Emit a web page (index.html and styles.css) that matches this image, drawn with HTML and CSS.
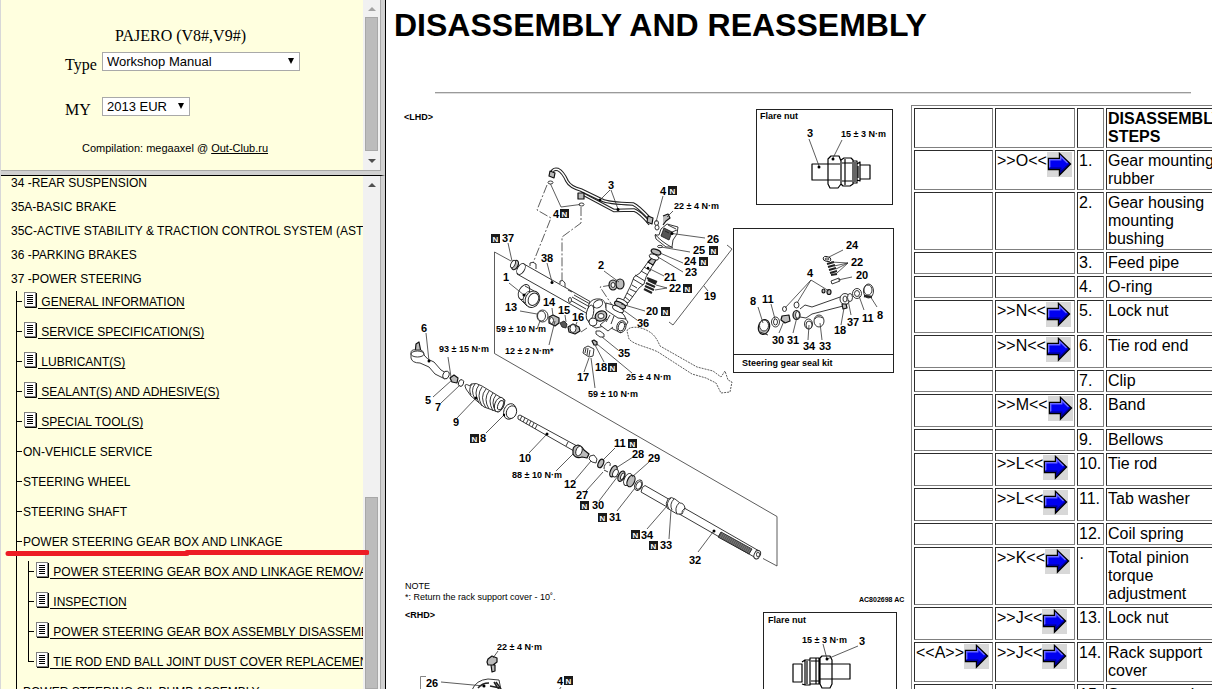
FILE: index.html
```html
<!DOCTYPE html>
<html lang="en">
<head>
<meta charset="utf-8">
<title>Pajero Workshop Manual</title>
<link rel="stylesheet" href="styles.css">
</head>
<body>
<svg class="defs" width="0" height="0" aria-hidden="true">
  <symbol id="doc" viewBox="0 0 13 16">
    <rect x="0.5" y="0.5" width="11" height="14" fill="#fff" stroke="#808080"/>
    <path d="M1 15.5H12.5V1" fill="none" stroke="#000"/>
    <path d="M3 3.5H9M3 5.5H9M3 7.5H9M3 9.5H9M3 11.5H9" stroke="#000"/>
  </symbol>
  <symbol id="arrow" viewBox="0 0 25 25">
    <rect width="25" height="25" fill="#d8d8d8"/>
    <path d="M1.5 6.5H12.5V1.5L23.5 12L12.5 23V17.5H1.5Z" fill="#0000f0" stroke="#000" stroke-width="1.4"/>
    <path d="M2.7 15.5V7.7H13.7V4.5L20.5 11" fill="none" stroke="#6a6aff" stroke-width="1.4"/>
    <path d="M3 16H13.8V19.8L21.5 12.4" fill="none" stroke="#00008a" stroke-width="1.2"/>
  </symbol>
  <symbol id="new" viewBox="0 0 9 9">
    <rect width="9" height="9" fill="#1a1a1a"/>
    <text class="new-text" x="4.5" y="7.5" text-anchor="middle">N</text>
  </symbol>
</svg>

<aside class="sidebar">
  <section class="frame frame-top">
    <form class="picker">
      <p class="model">PAJERO (V8#,V9#)</p>
      <div class="field">
        <label for="type">Type</label>
        <span class="select select-wide"><select id="type"><option>Workshop Manual</option></select></span>
      </div>
      <div class="field">
        <label for="year">MY</label>
        <span class="select select-short"><select id="year"><option>2013 EUR</option></select></span>
      </div>
      <p class="credit">Compilation: megaaxel @ <a href="#">Out-Club.ru</a></p>
    </form>
    <div class="scrollbar" aria-hidden="true">
      <span class="up off"></span><span class="thumb"></span><span class="down"></span>
    </div>
  </section>
  <section class="frame frame-tree">
    <nav class="tree">
      <ul class="chapters">
        <li>34 -REAR SUSPENSION</li>
        <li>35A-BASIC BRAKE</li>
        <li>35C-ACTIVE STABILITY &amp; TRACTION CONTROL SYSTEM (ASTC)</li>
        <li>36 -PARKING BRAKES</li>
        <li>37 -POWER STEERING
          <ul class="branch">
            <li><svg class="doc"><use href="#doc"/></svg><a href="#">&nbsp;GENERAL INFORMATION</a></li>
            <li><svg class="doc"><use href="#doc"/></svg><a href="#">&nbsp;SERVICE SPECIFICATION(S)</a></li>
            <li><svg class="doc"><use href="#doc"/></svg><a href="#">&nbsp;LUBRICANT(S)</a></li>
            <li><svg class="doc"><use href="#doc"/></svg><a href="#">&nbsp;SEALANT(S) AND ADHESIVE(S)</a></li>
            <li><svg class="doc"><use href="#doc"/></svg><a href="#">&nbsp;SPECIAL TOOL(S)</a></li>
            <li>ON-VEHICLE SERVICE</li>
            <li>STEERING WHEEL</li>
            <li>STEERING SHAFT</li>
            <li>POWER STEERING GEAR BOX AND LINKAGE
              <ul class="branch leaf">
                <li><svg class="doc"><use href="#doc"/></svg><a href="#">&nbsp;POWER STEERING GEAR BOX AND LINKAGE REMOVAL AND INSTALLATION</a></li>
                <li><svg class="doc"><use href="#doc"/></svg><a href="#">&nbsp;INSPECTION</a></li>
                <li><svg class="doc"><use href="#doc"/></svg><a href="#">&nbsp;POWER STEERING GEAR BOX ASSEMBLY DISASSEMBLY AND REASSEMBLY</a></li>
                <li><svg class="doc"><use href="#doc"/></svg><a href="#">&nbsp;TIE ROD END BALL JOINT DUST COVER REPLACEMENT</a></li>
              </ul>
            </li>
            <li>POWER STEERING OIL PUMP ASSEMBLY</li>
          </ul>
        </li>
      </ul>
    </nav>
    <div class="scrollbar" aria-hidden="true">
      <span class="up"></span><span class="track"></span><span class="thumb"></span>
    </div>
    <svg class="marker" viewBox="0 0 364 6" aria-hidden="true"><path d="M3 3.5H182M182 2.5H362" stroke="#ed1c24" stroke-width="5" stroke-linecap="round"/></svg>
  </section>
</aside>

<main class="manual">
  <h1>DISASSEMBLY AND REASSEMBLY</h1>
  <hr>
  <div class="content">
  <svg class="diagram" viewBox="400 105 505 620" role="img" aria-label="Exploded view of the steering gear">
    <!-- frames -->
    <g class="box">
      <rect x="756.5" y="109.5" width="136" height="95"/>
      <rect x="733.5" y="228.5" width="160" height="144"/>
      <path d="M733.5 354.5H893.5"/>
      <rect x="763.5" y="612.5" width="133" height="120"/>
    </g>

    <!-- assembly outline and phantom lines -->
    <g class="thin">
      <path d="M511 261L494.500 252V353.500L777 516.500V566L763 558.500"/>
      <path d="M727 245L732 249L673 325L669 322M704 286L708 291"/>
      <path class="phantom" d="M547 185L537 210L551 218L533 263M581 207V223L562 237V282M612 285L600 287L612 305"/>
      <path class="dash" d="M627 331C628 326 640 326 648 331C654 334 657 339 660 346L697 367L713 371L721 377L725 371L728 380L732 382L730 392L721 393L716 383L706 378L692 374L658 352C648 347 634 345 629 339Z"/>
    </g>

    <!-- feed pipes -->
    <g class="pipe-out"><path d="M552 176Q551 168 558 169.500Q563 172 567 181Q570 187 581 190L602 200Q607 203 633 204Q638 206 650 219"/><path d="M581 193L614 210.500L634 210Q640 212 650 224"/></g>
    <g class="pipe-in"><path d="M552 176Q551 168 558 169.500Q563 172 567 181Q570 187 581 190L602 200Q607 203 633 204Q638 206 650 219"/><path d="M581 193L614 210.500L634 210Q640 212 650 224"/></g>
    <g class="part">
      <path d="M550 171L555 173L554 178L549 176ZM578 193H584V199H578ZM648 216L653 218L652 224L647 222Z" class="shade"/>
      <ellipse cx="550.500" cy="182.500" rx="2.500" ry="1.500"/><ellipse cx="581.500" cy="204.500" rx="2.500" ry="1.500"/>
      <ellipse cx="656.500" cy="223" rx="2" ry="2.500"/><ellipse cx="657" cy="227.500" rx="2" ry="2.500"/>
      <path d="M663 216L668 214L670 218L666 221L663 225" class="shade"/>
    </g>

    <!-- rack housing -->
    <g class="part">
      <path d="M523 263.500L590 301.500L587 313.500L517 274Z"/>
      <ellipse cx="521" cy="269" rx="3.500" ry="6" transform="rotate(30 521 269)"/>
      <path d="M530 266V263Q533 261 536 264V269M560 284V281Q563 279 565 283V287M568 290L572 292M574 295L590 304M572 297L588 306M570 300L586 309"/>
      <ellipse cx="570" cy="300" rx="1.500" ry="2.500"/>
      <ellipse cx="515" cy="265" rx="3" ry="5" transform="rotate(25 515 265)" class="shade"/>
      <ellipse cx="513" cy="264" rx="2" ry="4" transform="rotate(25 513 264)"/>
      <path d="M589 304Q592 298 600 299Q606 300 606 308L624 317L628 322L621 333L611 328L604 326L596 328Q588 325 587 317Z"/>
      <ellipse cx="598" cy="304" rx="5" ry="3.500" transform="rotate(-30 598 304)"/>
      <ellipse cx="590" cy="313" rx="3.500" ry="8" transform="rotate(12 590 313)"/>
      <ellipse cx="601" cy="316" rx="6" ry="5" transform="rotate(-25 601 316)" class="shade"/>
      <ellipse cx="593" cy="322" rx="4" ry="4"/>
      <ellipse cx="601" cy="316" rx="3" ry="2.500"/>
      <path d="M606 303L613 305L624 315L626 319L618 318L606 310ZM607 319L600 325L608 331L613 327M610 315L606 322M614 316L611 324"/>
      <ellipse cx="621.500" cy="326.500" rx="4.500" ry="6" transform="rotate(15 621 326)"/>
      <ellipse cx="621.500" cy="326.500" rx="3" ry="4.500" transform="rotate(15 621 326)"/>
      <!-- bushings and rubber -->
      <ellipse cx="524" cy="292" rx="5" ry="8" transform="rotate(28 524 292)"/>
      <ellipse cx="527" cy="297" rx="3" ry="6" transform="rotate(28 527 297)"/>
      <ellipse cx="532.500" cy="299" rx="7" ry="8.500" transform="rotate(28 532 299)"/>
      <ellipse cx="533.500" cy="299" rx="5" ry="6.500" transform="rotate(28 533 299)"/>
      <path d="M520 299L527 306M525 286L534 291"/>
      <ellipse cx="613" cy="285" rx="4" ry="5" class="shade"/><ellipse cx="620" cy="284" rx="4" ry="5" class="shade"/><ellipse cx="613" cy="285" rx="2" ry="2.500"/>
      <ellipse cx="542.500" cy="316" rx="5.500" ry="6"/><ellipse cx="541.500" cy="316" rx="4" ry="5"/>
      <path d="M549 317L553 315L559 318V323L555 326L549 323Z" class="shade"/><ellipse cx="551.500" cy="320.500" rx="2" ry="3"/>
      <path d="M560 323L564 321L567 324L566 328L562 327Z" class="dark"/>
      <path d="M568 327L573 324L579 327L580 331L575 334L569 332Z" class="shade"/><ellipse cx="573" cy="328.500" rx="3" ry="4"/>
      <path d="M596 331L600 331L604 334L604 337L600 337L596 334Z"/><path d="M592 341L594 340L597 342V345L594 345Z" class="shade"/>
      <path d="M584 348L588 346L594 349L593 356L589 357L583 353Z"/><path d="M586 348L585 353M588 348L587 355M590 350L589 356"/>
    </g>

    <!-- pinion and valve -->
    <g class="part">
      <path d="M648 262L653 265L646 277L644 284L639 288L628 303L623 301L631 285L634 277L640 273Z"/>
      <path d="M635 275L645 281M633 279L643 285M641 271L648 275M644 267L651 271M632 285L637 288M630 289L636 292M627 293L633 297M625 297L630 301"/>
      <path d="M648 262L652 258L656 260L653 265Z" class="shade"/>
      <ellipse cx="622" cy="302" rx="6" ry="2.500" transform="rotate(28 622 302)"/>
      <ellipse cx="620" cy="305" rx="6" ry="2.500" transform="rotate(28 620 305)" class="shade"/>
      <ellipse cx="618" cy="309" rx="6" ry="2.500" transform="rotate(28 618 309)"/>
      <ellipse cx="656" cy="252" rx="5" ry="2.500" transform="rotate(20 656 252)" class="shade"/>
      <ellipse cx="654" cy="257" rx="5" ry="2.500" transform="rotate(20 654 257)"/>
      <path d="M648 280L656 284M646 283L655 287M645 286L654 290M644 289L652 293M647 278L657 282" stroke-width="2.200"/>
      <ellipse cx="660" cy="246.500" rx="2.500" ry="1.200"/>
      <path d="M655 235L659 235L661 229L667 224L678 227L677 234L673 240L672 247L666 247L656 239Z"/>
      <path d="M664 228L672 232L669 240L661 236ZM668 225L676 229M672 232L677 230M665 231L669 233" class="dark"/>
      <path d="M655 234Q660 241 673 248"/>
    </g>

    <!-- tie rod end -->
    <g class="part">
      <path d="M415 354L416 344L419 342L421 352Z" class="shade"/>
      <path d="M411 353Q411 349 416 350L421 350Q424 351 424 355Q427 360 434 362L441 370L448 374L445 379L435 374L429 367L420 363Q412 363 411 358Z"/>
      <ellipse cx="417.500" cy="354" rx="6.500" ry="3"/>
      <ellipse cx="446" cy="375" rx="3" ry="4" transform="rotate(20 446 375)"/>
      <path d="M450 378L454 375L458 378L457 383L452 382Z" class="shade"/>
      <ellipse cx="461" cy="383" rx="2.500" ry="3.500" transform="rotate(20 461 383)"/>
      <!-- bellows -->
      <path d="M465 386Q465 383 470 386L471 384Q476 382 482 386L500 397L505 400Q504 410 498 412L484 407L471 396L466 389Z"/>
      <path d="M472 384Q468 389 471 395M475 384Q470 390 475 399M479 385Q473 392 479 403M482 387Q476 395 482 406M486 389Q479 397 486 408M489 391Q483 399 489 409M493 393Q487 400 493 411M496 395Q490 402 496 412"/>
      <ellipse cx="499.500" cy="404.500" rx="4.500" ry="7.500" transform="rotate(20 499 404)"/><ellipse cx="500.500" cy="405" rx="2.500" ry="5" transform="rotate(20 500 405)"/>
      <ellipse cx="510" cy="411.500" rx="6" ry="8" transform="rotate(20 510 411)"/><ellipse cx="511.500" cy="412" rx="5" ry="6.500" transform="rotate(20 511 412)"/>
      <!-- tie rod -->
      <path d="M520 415L577 446L574 451L518 419Q517 415 520 415ZM522 416L520 420M525 418L523 422M528 420L526 424M531 421L529 425M534 423L532 427M537 425L535 429M568 442L566 446"/>
      <path d="M573 450Q573 446 578 445Q582 446 584 450L589 454L587 458L582 457Q576 459 573 454Z" class="shade"/>
      <ellipse cx="579" cy="451" rx="3" ry="5" transform="rotate(20 579 451)"/>
      <path d="M590 456L594 455L597 459L596 463L592 462L589 459Z"/>
      <ellipse cx="601" cy="463.500" rx="2.500" ry="4.500" transform="rotate(25 601 463)" class="shade"/>
      <path d="M604 469Q604 463 609 462Q611 463 610 466M608 472L604 470"/>
      <ellipse cx="613.500" cy="471" rx="3" ry="6" transform="rotate(25 613 471)" class="shade"/><ellipse cx="615.500" cy="473" rx="2.500" ry="4" transform="rotate(25 615 473)"/>
      <ellipse cx="621.500" cy="476" rx="3" ry="5.500" transform="rotate(25 621 476)" class="shade"/><ellipse cx="622.500" cy="476" rx="1.500" ry="3.500" transform="rotate(25 622 476)"/>
      <ellipse cx="628" cy="479.500" rx="3.500" ry="6.500" transform="rotate(25 628 479)"/><ellipse cx="631" cy="481" rx="3.500" ry="6" transform="rotate(25 631 481)" class="shade"/>
      <ellipse cx="638.500" cy="485" rx="3.500" ry="5.500" transform="rotate(25 638 485)"/><ellipse cx="639" cy="485.500" rx="2.500" ry="4" transform="rotate(25 639 485)"/>
      <!-- rack -->
      <path d="M645 485.500L760 551.500Q761 556 756 558L641 492Q642 486 645 485.500Z"/>
      <path d="M668 499Q671 496 675 499L680 503Q684 503 685 508L682 514L677 514L667 508Q665 503 668 499Z"/>
      <path d="M671 498Q665 503 669 509M674 499Q669 504 672 510M679 503Q674 508 677 514M685 508Q681 511 682 514"/>
      <path d="M721 532L752 549L749 554L718 537Z" class="dark"/>
      <path d="M721 535L750 551" stroke="#777" stroke-width="5" stroke-dasharray="1 1"/>
      <ellipse cx="757.500" cy="554.500" rx="3" ry="4.500" transform="rotate(25 757 554)"/><ellipse cx="758" cy="554.500" rx="1.500" ry="2.500"/>
    </g>

    <!-- flare nut -->
    <g class="part nut">
      <path d="M812 164H828V180H812ZM828 159L831 156H839L841 161V184L838 188H830L828 184ZM841 160L844 158H851L853 160V184L850 186H843L841 184ZM853 161H857V183H853ZM857 164L860 162V181L857 180M860 165H870V179H860Z"/>
      <path d="M828 164H840M828 180H840M842 163H852M842 181H852M845 159V185M855 162V182M858 166V178"/>
      <path d="M793 664H802V682H793ZM802 662L805 660V685L802 684M805 660H810V685H805ZM810 658H819V684H810ZM820 658L822 656H830L832 660V684L830 688H822L820 684ZM832 664H850V679H832Z"/>
      <path d="M811 661H819M811 681H819M816 658V684M820 664H832M820 679H832M807 661V684"/>
    </g>

    <!-- seal kit -->
    <g class="part">
      <ellipse cx="764" cy="327" rx="5.500" ry="7.500" transform="rotate(15 764 327)" class="shade"/><ellipse cx="764" cy="325.500" rx="4.500" ry="5.500"/><path d="M760 332L768 335"/>
      <ellipse cx="775.500" cy="322" rx="4" ry="5"/><ellipse cx="775.500" cy="322" rx="2" ry="3"/>
      <path d="M800 309L805 305L812 307L843 296L847 305L812 314L806 318L800 317"/>
      <path d="M782 316L789 315L790 321L785 323L781 320Z" class="shade"/><ellipse cx="796.500" cy="315" rx="3.500" ry="4.500" class="shade"/><ellipse cx="797.500" cy="315" rx="2" ry="3.500"/>
      <ellipse cx="845" cy="299" rx="5" ry="5.500"/><ellipse cx="845" cy="299" rx="2" ry="3"/><ellipse cx="850" cy="297.500" rx="2.500" ry="4"/>
      <ellipse cx="857" cy="293.500" rx="4.500" ry="5"/><ellipse cx="857" cy="293.500" rx="2.500" ry="3"/>
      <ellipse cx="868.500" cy="291" rx="5" ry="7"/><ellipse cx="868" cy="290" rx="4" ry="5"/><path d="M864 296L872 297" stroke-width="2.500"/>
      <path d="M842 304L846 304L847 308L843 309Z" class="shade"/>
      <ellipse cx="784.500" cy="309" rx="2" ry="2.500"/><ellipse cx="796.500" cy="305" rx="2.500" ry="3"/>
      <ellipse cx="823.500" cy="291" rx="1.500" ry="2" class="shade"/><ellipse cx="829" cy="292" rx="2" ry="2.500" class="shade"/>
      <ellipse cx="808.500" cy="324" rx="4" ry="5"/><ellipse cx="809" cy="325" rx="3" ry="4"/>
      <ellipse cx="819" cy="321" rx="5" ry="6"/><path d="M815 319Q817 315 823 318"/>
      <ellipse cx="827" cy="259" rx="4" ry="2.500" transform="rotate(15 827 259)"/><ellipse cx="827" cy="259" rx="2" ry="1"/>
      <path d="M827 264L834 262M828 267L835 265M829 270L836 268M830 273L837 271M831 275L837 274" stroke-width="2"/>
      <path d="M831 281L839 278L840 281L832 284Z"/>
    </g>

    <!-- right-hand-drive parts -->
    <g class="part">
      <path d="M488 659L492 656L497 658V662L493 665H488L487 662ZM491 665L495 665L495 671L492 672Z" class="shade"/>
      <path d="M472 690Q476 680 488 679L499 680L501 690"/><path d="M478 688Q482 683 489 683M494 682L499 690M496 682L501 689M490 686L500 688" stroke-width="1.500"/>
      <path d="M426 676.500H420.500V690" class="thin-line"/>
    </g>

    <!-- leaders -->
    <g class="leader">
      <path d="M610 190L600 200M611 190L618 209M550.500 184L561 207L580 204.500M663 196L656 222M673 211L667 217M705 238L672 233.500M690 252L661 247M683 263L660 253M683 272L658 257M664 276L648 268M667 288L656 285M667 288L655 290M645 311L621 304M637 320L619 307"/>
      <path d="M508 243L512 261M547 263L552 282M604 271L619 282M509 283L524 295M520 311L537 314M552 308L553 316M565 315L566 322M577 322L575 327M537 329L540 321M555 321L549 345M581 332L587 328M618 350L602 337M604 362L595 345M632 373L597 344M584 372L589 358M595 388L591 358"/>
      <path d="M426 333L429 361M448 357L451 377M433 397L452 380M441 403L460 385M457 418L476 398M486 433L504 415M529 453L547 434M556 471L573 454M575 480L591 461M586 491L603 472M615 448L603 460M633 457L616 468M649 462L632 477M599 501L618 476M617 511L635 488M647 529L667 506M669 539L671 510M698 552L713 532"/>
      <path d="M809 139L819 166M842 140L833 158M843 250L829 257M848 263L831 262M848 263L834 266M848 263L836 269M848 263L837 273M852 277L838 280M811 280L785 308M811 280L797 303M811 280L829 291M758 307L763 323M771 304L775 319M779 333L784 321M793 333L797 317M808 340L809 325M822 340L820 323M841 325L844 308M851 315L848 300M864 310L859 296M877 307L870 296"/>
      <path d="M498 651L493 658M441 682L484 686M561 687L559 690M823 644L827 659L858 646"/>
    </g>
    <g class="dots">
      <circle cx="600" cy="200" r="1.500"/><circle cx="618" cy="209.500" r="1.500"/><circle cx="552" cy="282.500" r="1.500"/><circle cx="524" cy="295" r="1.500"/><circle cx="672" cy="233.500" r="1.500"/><circle cx="648" cy="268" r="1.200"/><circle cx="429" cy="361" r="1.500"/><circle cx="476" cy="398" r="1.500"/><circle cx="547" cy="434" r="1.500"/><circle cx="714" cy="531" r="1.500"/><circle cx="819" cy="167" r="1.500"/><circle cx="833" cy="159" r="1.500"/><circle cx="827" cy="659" r="1.500"/><circle cx="484" cy="686" r="1.500"/><circle cx="504" cy="415" r="1.200"/>
    </g>

    <g class="num">
      <text x="608" y="189">3</text><text x="553" y="218">4</text><text x="660" y="195">4</text><text x="707" y="243">26</text>
      <text x="693" y="254">25</text><text x="684" y="265">24</text><text x="685" y="276">23</text><text x="664" y="281">21</text>
      <text x="669" y="292">22</text><text x="704" y="300">19</text><text x="646" y="315">20</text><text x="637" y="327">36</text>
      <text x="598" y="269">2</text><text x="503" y="281">1</text><text x="502" y="242">37</text><text x="541" y="262">38</text>
      <text x="505" y="311">13</text><text x="543" y="306">14</text><text x="558" y="314">15</text><text x="572" y="321">16</text>
      <text x="618" y="357">35</text><text x="595" y="371">18</text><text x="577" y="381">17</text><text x="421" y="332">6</text>
      <text x="425" y="404">5</text><text x="435" y="411">7</text><text x="453" y="426">9</text><text x="480" y="442">8</text>
      <text x="519" y="462">10</text><text x="564" y="488">12</text><text x="614" y="447">11</text><text x="632" y="458">28</text>
      <text x="648" y="462">29</text><text x="576" y="499">27</text><text x="592" y="509">30</text><text x="609" y="521">31</text>
      <text x="641" y="539">34</text><text x="660" y="549">33</text><text x="689" y="564">32</text>
      <text x="807" y="137">3</text><text x="846" y="249">24</text><text x="851" y="266">22</text><text x="856" y="279">20</text>
      <text x="807" y="277">4</text><text x="750" y="305">8</text><text x="762" y="303">11</text><text x="772" y="344">30</text>
      <text x="787" y="344">31</text><text x="803" y="350">34</text><text x="819" y="350">33</text><text x="834" y="334">18</text>
      <text x="847" y="326">37</text><text x="862" y="322">11</text><text x="877" y="319">8</text>
      <text x="426" y="687">26</text><text x="557" y="685">4</text><text x="859" y="645">3</text>
    </g>
    <g>
      <use href="#new" x="560" y="209" width="9" height="9"/><use href="#new" x="491" y="234" width="9" height="9"/>
      <use href="#new" x="668" y="186" width="9" height="9"/><use href="#new" x="709" y="246" width="9" height="9"/>
      <use href="#new" x="699" y="257" width="9" height="9"/><use href="#new" x="683" y="284" width="9" height="9"/>
      <use href="#new" x="661" y="307" width="9" height="9"/><use href="#new" x="608" y="363" width="9" height="9"/>
      <use href="#new" x="470" y="434" width="9" height="9"/><use href="#new" x="628" y="439" width="9" height="9"/>
      <use href="#new" x="580" y="501" width="9" height="9"/><use href="#new" x="598" y="513" width="9" height="9"/>
      <use href="#new" x="631" y="530" width="9" height="9"/><use href="#new" x="649" y="541" width="9" height="9"/>
      <use href="#new" x="564" y="676" width="9" height="9"/>
    </g>
    <g class="cap">
      <text x="404" y="120">&lt;LHD&gt;</text><text x="405" y="618">&lt;RHD&gt;</text>
      <text x="760" y="119">Flare nut</text><text x="768" y="623">Flare nut</text><text x="742" y="366">Steering gear seal kit</text>
      <text x="841" y="137">15 ± 3 N·m</text><text x="802" y="643">15 ± 3 N·m</text>
      <text x="674" y="209">22 ± 4 N·m</text><text x="497" y="650">22 ± 4 N·m</text>
      <text x="496" y="332">59 ± 10 N·m</text><text x="505" y="354">12 ± 2 N·m*</text><text x="626" y="380">25 ± 4 N·m</text>
      <text x="588" y="397">59 ± 10 N·m</text><text x="439" y="352">93 ± 15 N·m</text><text x="512" y="478">88 ± 10 N·m</text>
    </g>
    <g class="note"><text x="405" y="589">NOTE</text><text x="405" y="600">*: Return the rack support cover - 10˚.</text></g>
    <text class="code" x="859" y="602">AC802698 AC</text>
  </svg>

  <table class="steps">
    <colgroup><col class="c1"><col class="c2"><col class="c3"><col class="c4"></colgroup>
    <tr><td></td><td></td><td></td><th>DISASSEMBLY STEPS</th></tr>
    <tr><td></td><td>&gt;&gt;O&lt;&lt;<svg class="go"><use href="#arrow"/></svg></td><td>1.</td><td>Gear mounting rubber</td></tr>
    <tr><td></td><td></td><td>2.</td><td>Gear housing mounting bushing</td></tr>
    <tr><td></td><td></td><td>3.</td><td>Feed pipe</td></tr>
    <tr><td></td><td></td><td>4.</td><td>O-ring</td></tr>
    <tr class="ref"><td></td><td>&gt;&gt;N&lt;&lt;<svg class="go"><use href="#arrow"/></svg></td><td>5.</td><td>Lock nut</td></tr>
    <tr class="ref"><td></td><td>&gt;&gt;N&lt;&lt;<svg class="go"><use href="#arrow"/></svg></td><td>6.</td><td>Tie rod end</td></tr>
    <tr><td></td><td></td><td>7.</td><td>Clip</td></tr>
    <tr class="ref"><td></td><td>&gt;&gt;M&lt;&lt;<svg class="go"><use href="#arrow"/></svg></td><td>8.</td><td>Band</td></tr>
    <tr><td></td><td></td><td>9.</td><td>Bellows</td></tr>
    <tr class="ref"><td></td><td>&gt;&gt;L&lt;&lt;<svg class="go"><use href="#arrow"/></svg></td><td>10.</td><td>Tie rod</td></tr>
    <tr class="ref"><td></td><td>&gt;&gt;L&lt;&lt;<svg class="go"><use href="#arrow"/></svg></td><td>11.</td><td>Tab washer</td></tr>
    <tr><td></td><td></td><td>12.</td><td>Coil spring</td></tr>
    <tr><td></td><td>&gt;&gt;K&lt;&lt;<svg class="go"><use href="#arrow"/></svg></td><td>·</td><td>Total pinion torque adjustment</td></tr>
    <tr class="ref"><td></td><td>&gt;&gt;J&lt;&lt;<svg class="go"><use href="#arrow"/></svg></td><td>13.</td><td>Lock nut</td></tr>
    <tr><td>&lt;&lt;A&gt;&gt;<svg class="go"><use href="#arrow"/></svg></td><td>&gt;&gt;J&lt;&lt;<svg class="go"><use href="#arrow"/></svg></td><td>14.</td><td>Rack support cover</td></tr>
    <tr><td></td><td></td><td>15.</td><td>Support spring</td></tr>
  </table>
  </div>
</main>
</body>
</html>
```
FILE: styles.css
```css
* { box-sizing: border-box; }
body {
  margin: 0;
  height: 100vh;
  display: flex;
  overflow: hidden;
  background: #fff;
  color: #000;
  font-family: "Liberation Sans", Arial, sans-serif;
}
.defs { position: absolute; }

/* sidebar frames */
.sidebar {
  flex: 0 0 386px;
  min-width: 0;
  display: flex;
  flex-direction: column;
  border-left: 1px solid #d8d8d8;
  border-right: 1px solid #000;
  background: #ffffdf;
}
.frame {
  display: flex;
  min-width: 0;
  padding-right: 1px;
  border-right: 4px solid #d0d0d0;
  box-shadow: inset -1px 0 #a8a8a8;
  overflow: hidden;
}
.frame-top {
  flex: 0 0 175px;
  padding-bottom: 1px;
  border-bottom: 4px solid #d0d0d0;
  box-shadow: inset -1px -1px #a8a8a8;
}
.frame-tree {
  position: relative;
  flex: 1;
  min-height: 0;
  border-top: 1px solid #000;
}

/* manual picker */
.picker {
  flex: 1;
  min-width: 0;
  padding: 26px 0 0 64px;
  font-family: "Liberation Serif", "Times New Roman", serif;
  font-size: 16px;
}
.model { margin: 0 0 6px; padding-left: 50px; line-height: 20px; }
.field { display: flex; height: 45px; }
.field label { width: 37px; line-height: 26px; }
.select { position: relative; height: 19px; }
.select::after {
  content: "";
  position: absolute;
  right: 6px;
  top: 6px;
  border: 3px solid transparent;
  border-top: 6px solid #000;
  border-bottom: 0;
  pointer-events: none;
}
.select-wide { width: 198px; }
.select-short { width: 88px; }
.select select {
  display: block;
  width: 100%;
  height: 19px;
  padding: 0 4px;
  border: 1px solid #a9a9a9;
  border-radius: 0;
  appearance: none;
  background: #fff;
  color: #000;
  font: 13px "Liberation Sans", Arial, sans-serif;
}
.credit { margin: 0; padding-left: 17px; font: 11px/12px "Liberation Sans", Arial, sans-serif; }
.credit a { color: #000; }

/* scrollbars */
.scrollbar { flex: 0 0 17px; display: flex; flex-direction: column; background: #f1f1f1; }
.up, .down { flex: 0 0 17px; display: flex; align-items: center; justify-content: center; }
.up::before, .down::before { content: ""; border: 4px solid transparent; }
.up::before { border-top: 0; border-bottom-color: #505050; }
.down::before { border-bottom: 0; border-top-color: #505050; }
.up.off::before { border-bottom-color: #a3a3a3; }
.thumb { flex: 1; margin: 0 2px; border: 1px solid #a8a8a8; background: #bcbcbc; }
.down { flex-basis: 19px; }
.track { flex: 0 0 304px; }

/* contents tree */
.tree { flex: 1; min-width: 0; overflow: hidden; font-size: 12px; white-space: nowrap; }
.tree ul { margin: 0; padding: 0; list-style: none; }
.tree .chapters { margin-top: -5px; }
.chapters > li { padding-left: 10px; line-height: 24px; }
.branch > li {
  position: relative;
  height: 30px;
  margin-left: 5px;
  padding-left: 7px;
  line-height: 22px;
}
.branch > li:has(.leaf) { height: auto; }
.branch > li::before, .branch > li::after { content: ""; position: absolute; left: 0; background: #000; }
.branch > li::before { top: 0; bottom: 0; width: 1px; }
.branch > li::after { top: 10px; width: 6px; height: 1px; }
.tree .leaf { padding-top: 8px; }
.leaf > li:last-child::before { bottom: auto; height: 10px; }
.tree a { color: #000; text-decoration: underline; text-underline-offset: 2px; }
.doc { width: 13px; height: 16px; margin: 1px 1px 0 1px; vertical-align: top; }
.marker { position: absolute; left: 4px; top: 374px; width: 364px; height: 6px; }

/* manual page */
.manual { flex: 1; min-width: 0; padding: 7px 0 0 8px; overflow: hidden; }
h1 { margin: 0; font-size: 32px; line-height: 36px; white-space: nowrap; }
hr { margin: 49px 21px 11px 41px; border: 0; border-top: 1px solid #9a9a9a; border-bottom: 1px solid #ddd; }
.content { display: flex; align-items: flex-start; gap: 6px; padding-left: 6px; }
.diagram { flex: 0 0 505px; height: 620px; }

.diagram .box, .thin, .part, .leader, .pipe-in, .pipe-out { fill: none; stroke: #222; stroke-width: 1; }
.thin, .leader { stroke: #333; stroke-width: 0.8; }
.phantom { stroke-dasharray: 9 2 2 2; }
.dash { stroke-dasharray: 2 1; }
.part { fill: #fff; stroke-width: 0.9; stroke-linejoin: round; }
.nut { stroke: #000; stroke-width: 1.2; }
.part .shade { fill: #bbb; stroke: #111; stroke-width: 1.2; }
.part .dark { fill: #555; }
.part .thin-line { fill: none; stroke: #777; }
.pipe-out { stroke-width: 3.6; }
.pipe-in { stroke: #fff; stroke-width: 1.4; }
.dots { fill: #000; }
.num { font-size: 11px; font-weight: bold; }
.cap { font-size: 9px; font-weight: bold; }
.note { font-size: 9px; }
.code { font-size: 7px; font-weight: bold; }
.new-text { font-size: 8px; font-weight: bold; fill: #fff; }

/* disassembly steps */
.steps {
  flex: none;
  width: 316px;
  table-layout: fixed;
  border: 1px solid #808080;
  border-spacing: 2px;
  font-size: 16px;
  line-height: 18px;
}
.c1 { width: 79px; }
.c2 { width: 80px; }
.c3 { width: 27px; }
.steps td, .steps th {
  height: 22px;
  padding: 1px;
  border: 1px solid #808080;
  border-top-color: #2c2c2c;
  border-left-color: #2c2c2c;
  text-align: left;
  vertical-align: top;
}
.steps .ref td { height: 33px; }
.steps td:nth-child(-n+2) { white-space: nowrap; }
.go { width: 25px; height: 25px; vertical-align: top; }
```
